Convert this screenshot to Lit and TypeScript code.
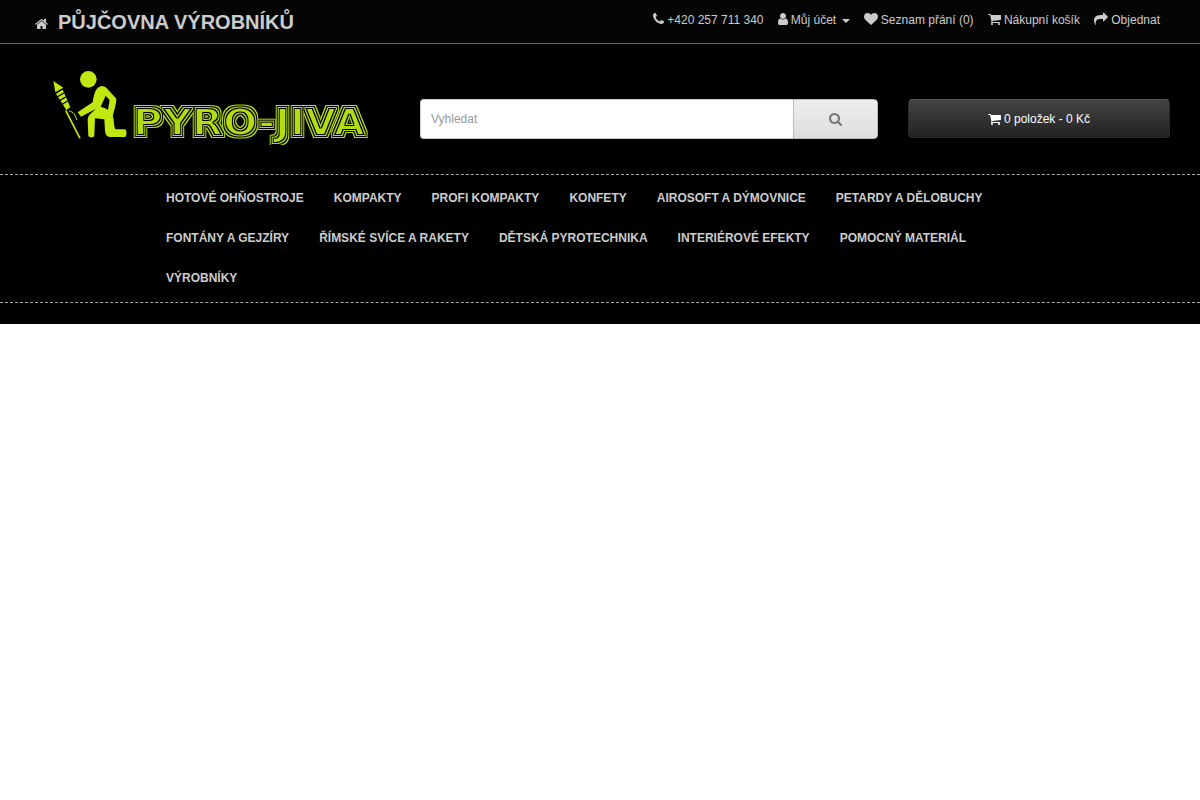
import { LitElement, html, css, svg } from "lit";
import { customElement } from "lit/decorators.js";

const ICONS: Record<string, [number, number, string]> = {
  phone: [192, 1408, "M1600 1240q0 27-10 70.5t-21 68.5q-21 50-122 106-94 51-186 51-27 0-53-3.5t-57.5-12.5-47-14.5-55.5-20.5-49-18q-98-35-175-83-127-79-264-216t-216-264q-48-77-83-175-3-9-18-49t-20.5-55.5-14.5-47-12.5-57.5-3.5-53q0-92 51-186 56-101 106-122 25-11 68.5-21t70.5-10q14 0 21 3 18 6 53 76 11 19 30 54t35 63.5 31 53.5q3 4 17.5 25t21.5 35.5 7 28.5q0 20-28.5 50t-62 55-62 53-28.5 46q0 9 5 22.5t8.5 20.5 14 24 11.5 19q76 137 174 235t235 174q2 1 19 11.5t24 14 20.5 8.5 22.5 5q18 0 46-28.5t53-62 55-62 50-28.5q14 0 28.5 7t35.5 21.5 25 17.5q25 15 53.5 31t63.5 35 54 30q70 35 76 53 3 7 3 21z"],
  user: [256, 1280, "M1536 1399q0 109-62.5 187t-150.5 78h-854q-88 0-150.5-78t-62.5-187q0-85 8.5-160.5t31.5-152 58.5-131 94-89 134.5-34.5q131 128 313 128t313-128q76 0 134.5 34.5t94 89 58.5 131 31.5 152 8.5 160.5zm-256-887q0 159-112.5 271.5t-271.5 112.5-271.5-112.5-112.5-271.5 112.5-271.5 271.5-112.5 271.5 112.5 112.5 271.5z"],
  heart: [0, 1792, "M896 1664q-26 0-44-18l-624-602q-10-8-27.5-26t-55.5-65.5-68-97.5-53.5-121-23.5-138q0-220 127-344t351-124q62 0 126.5 21.5t120 58 95.5 68.5 76 68q36-36 76-68t95.5-68.5 120-58 126.5-21.5q224 0 351 124t127 344q0 221-229 450l-623 600q-18 18-44 18z"],
  cart: [64, 1664, "M704 1536q0 52-38 90t-90 38-90-38-38-90 38-90 90-38 90 38 38 90zm896 0q0 52-38 90t-90 38-90-38-38-90 38-90 90-38 90 38 38 90zm128-1088v512q0 24-16.5 42.5t-40.5 21.5l-1044 122q13 60 13 70 0 16-24 64h920q26 0 45 19t19 45-19 45-45 19h-1024q-26 0-45-19t-19-45q0-11 8-31.5t16-36 21.5-40 15.5-29.5l-177-823h-204q-26 0-45-19t-19-45 19-45 45-19h256q16 0 28.5 6.5t19.5 15.5 13 24.5 8 26 5.5 29.5 4.5 26h1201q26 0 45 19t19 45z"],
  share: [0, 1792, "M1792 640q0 26-19 45l-512 512q-19 19-45 19t-45-19-19-45v-256h-224q-98 0-175.5 6t-154 21.5-133 42.5-105.5 69.5-80 101-48.5 138.5-17.5 181q0 55 5 123 0 6 2.5 23.5t2.5 26.5q0 15-8.5 25t-23.5 10q-16 0-28-17-7-9-13-22t-13.5-30-10.5-24q-127-285-127-451 0-199 53-333 162-403 875-403h224v-256q0-26 19-45t45-19 45 19l512 512q19 19 19 45z"],
  search: [64, 1664, "M1216 832q0-185-131.5-316.5t-316.5-131.5-316.5 131.5-131.5 316.5 131.5 316.5 316.5 131.5 316.5-131.5 131.5-316.5zm512 832q0 52-38 90t-90 38q-54 0-90-38l-343-342q-179 124-399 124-143 0-273.5-55.5t-225-150-150-225-55.5-273.5 55.5-273.5 150-225 225-150 273.5-55.5 273.5 55.5 225 150 150 225 55.5 273.5q0 220-124 399l343 343q37 37 37 90z"],
  home: [64, 1664, "M1472 992v480q0 26-19 45t-45 19h-384v-384h-256v384h-384q-26 0-45-19t-19-45v-480q0-1 .5-3t.5-3l575-474 575 474q1 2 1 6zm223-69l-62 74q-8 9-21 11h-3q-13 0-21-7l-692-577-692 577q-12 8-24 7-13-2-21-11l-62-74q-8-10-7-23.5t11-21.5l719-599q32-26 76-26t76 26l244 204v-195q0-14 9-23t23-9h192q14 0 23 9t9 23v408l219 182q10 8 11 21.5t-7 23.5z"],
};

function icon(name: string) {
  const [x, w, d] = ICONS[name];
  return html`<svg class="fa" viewBox="${x} 0 ${w} 1792" width="${(w / 1792) * 14}" height="14" fill="currentColor"><path d="${d}"></path></svg>`;
}

const NAV = [
  "Hotové ohňostroje", "Kompakty", "Profi kompakty", "Konfety", "Airosoft a dýmovnice", "Petardy a dělobuchy",
  "Fontány a gejzíry", "Římské svíce a rakety", "Dětská pyrotechnika", "Interiérové efekty", "Pomocný materiál",
  "Výrobníky",
];

const logo = svg`
  <defs>
    <filter id="rings" x="-5%" y="-20%" width="110%" height="140%" color-interpolation-filters="sRGB">
      <feMorphology in="SourceAlpha" operator="dilate" radius="3" result="a0"/>
      <feMorphology in="SourceAlpha" operator="dilate" radius="2" result="a1"/>
      <feMorphology in="SourceAlpha" operator="dilate" radius="1" result="a2"/>
      <feMorphology in="SourceAlpha" operator="erode" radius="1" result="a4"/>
      <feComposite in="a0" in2="a1" operator="out" result="r1"/>
      <feComposite in="a2" in2="SourceAlpha" operator="out" result="r2"/>
      <feComposite in="SourceAlpha" in2="a4" operator="out" result="r3"/>
      <feMerge result="m"><feMergeNode in="r1"/><feMergeNode in="r2"/><feMergeNode in="a4"/></feMerge>
      <feFlood flood-color="#b4dc12"/>
      <feComposite in2="m" operator="in"/>
    </filter>
  </defs>
  <g transform="scale(0.3333)" fill="#c2e812">
    <circle cx="130" cy="43" r="25"/>
    <path d="M98 142L143 112C147 90 150 66 170 63C180 62 186 70 192 77L213 100C216 106 212 120 203 155L186 150L194 106L182 92L167 125C186 130 202 140 205 158C207 175 208 190 212 193L240 193C246 195 246 214 240 216L196 216C184 216 181 208 180 196L178 163L150 160L148 212C147 218 132 219 130 212L128 165C128 150 140 145 152 132L108 155Z"/>
    <path d="M25 48L55 68L31 82Z"/>
    <path d="M33 86L53 74L76 127L64 135Z" fill="#c2e812"/>
    <g stroke="#000" stroke-width="4" fill="none">
      <path d="M36 96L57 84M42 108L62 96M48 120L68 108"/>
    </g>
    <g stroke="#c2e812" fill="none">
      <path d="M62 136L105 220" stroke-width="5"/>
      <path d="M72 138C85 140 92 150 95 165" stroke-width="3"/>
    </g>
  </g>
  <text class="lt" x="88" y="70" textLength="232" lengthAdjust="spacingAndGlyphs" filter="url(#rings)">PYRO-JIVA</text>
`;

@customElement("app-root")
export class AppRoot extends LitElement {
  static styles = css`
    :host { display: block; font-family: "Liberation Sans", Arial, sans-serif; font-size: 12px; color: #ccc; }
    .fa { vertical-align: -2px; }
    .page { background: #000; height: 324px; }
    .top { height: 43px; border-bottom: 1px solid #666; display: flex; justify-content: space-between; padding: 0 40px 0 35px; background: #050505; }
    .brand { display: flex; align-items: center; gap: 10px; font-size: 20px; font-weight: 700; color: #ccc; text-transform: uppercase; height: 44px; }
    .brand .fa { margin-top: 4px; }
    .links { display: flex; gap: 14px; padding-top: 12px; line-height: 16px; }
    .caret { display: inline-block; width: 0; height: 0; margin-left: 2px; vertical-align: middle; border-top: 4px solid #ccc; border-left: 4px solid transparent; border-right: 4px solid transparent; }
    .head { display: grid; grid-template-columns: 375px 458px 262px; padding: 0 30px 0 45px; height: 130px; }
    .lg { display: block; margin-top: 21px; }
    .lt { font: 900 38px "DejaVu Sans", sans-serif; fill: #000; }
    .search { display: flex; height: 40px; margin-top: 55px; }
    .field { flex: 1; box-sizing: border-box; background: #fff; border: 1px solid #ccc; border-right: 0; border-radius: 4px 0 0 4px; padding: 0 10px; line-height: 38px; color: #999; }
    .sbtn { width: 85px; box-sizing: border-box; border: 1px solid #bbb; border-radius: 0 4px 4px 0; background: linear-gradient(to bottom, #eee, #ddd); color: #777; display: flex; align-items: center; justify-content: center; }
    .cart { margin: 55px 0 0 30px; height: 39px; width: 262px; box-sizing: border-box; border: 1px solid #2a2a2a; border-top-color: #555; border-radius: 4px; background: linear-gradient(to bottom, #444, #222); color: #fff; display: flex; align-items: center; justify-content: center; gap: 3px; }
    .nav { border-top: 1px dashed #aaa; border-bottom: 1px dashed #aaa; padding: 3px 151px 4px; display: flex; flex-wrap: wrap; align-content: flex-start; height: 129px; box-sizing: border-box; }
    .nav span { padding: 0 15px; line-height: 40px; font-weight: 700; text-transform: uppercase; color: #ccc; }
  `;

  render() {
    return html`
      <div class="page">
        <div class="top">
          <div class="brand">${icon("home")}<span>Půjčovna výrobníků</span></div>
          <div class="links">
            <span>${icon("phone")} +420 257 711 340</span>
            <span>${icon("user")} Můj účet <i class="caret"></i></span>
            <span>${icon("heart")} Seznam přání (0)</span>
            <span>${icon("cart")} Nákupní košík</span>
            <span>${icon("share")} Objednat</span>
          </div>
        </div>
        <div class="head">
          <svg class="lg" width="325" height="80" viewBox="0 0 325 80">${logo}</svg>
          <div class="search">
            <div class="field">Vyhledat</div>
            <div class="sbtn">${icon("search")}</div>
          </div>
          <div class="cart">${icon("cart")}<span>0 položek - 0 Kč</span></div>
        </div>
        <div class="nav">${NAV.map((n) => html`<span>${n}</span>`)}</div>
      </div>
    `;
  }
}
